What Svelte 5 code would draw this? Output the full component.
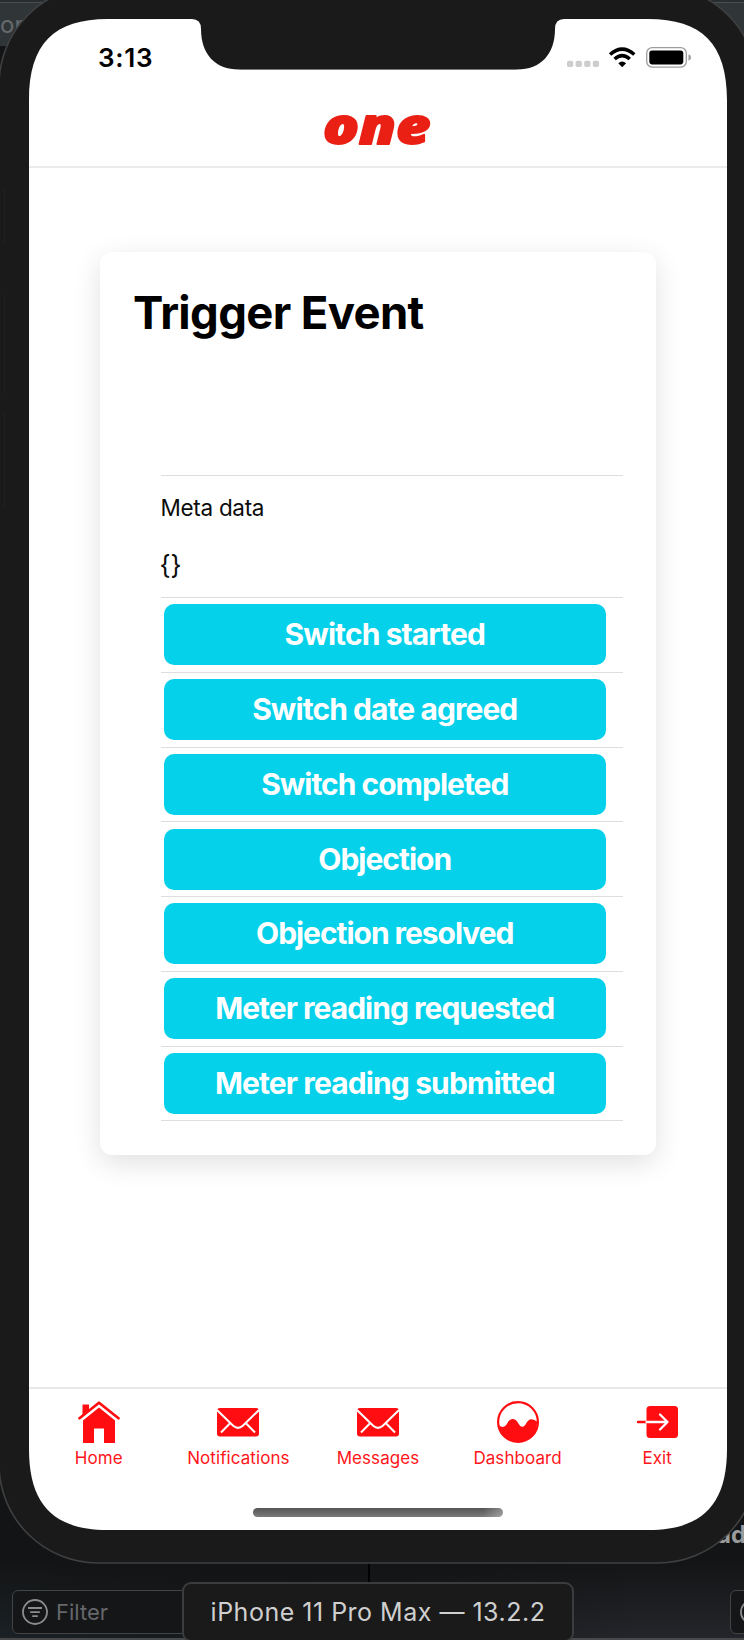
<script>
  const events = [
    { label: 'Switch started', spacing: -0.9 },
    { label: 'Switch date agreed', spacing: -0.93 },
    { label: 'Switch completed', spacing: -1 },
    { label: 'Objection', spacing: -1 },
    { label: 'Objection resolved', spacing: -1.05 },
    { label: 'Meter reading requested', spacing: -0.98 },
    { label: 'Meter reading submitted', spacing: -0.88 }
  ];
  const tabs = [
    { label: 'Home', icon: 'home' },
    { label: 'Notifications', icon: 'mail' },
    { label: 'Messages', icon: 'mail' },
    { label: 'Dashboard', icon: 'chart' },
    { label: 'Exit', icon: 'exit' }
  ];
</script>

<div class="desktop">
  <div class="editor-top">or</div>
  <div class="editor-word">ud</div>
  <div class="divider"></div>
  <div class="filter">
    <svg width="26" height="26" viewBox="0 0 26 26" fill="none" stroke="#8b8c8d" stroke-width="1.8">
      <circle cx="13" cy="13" r="12" /><path d="M6 9h14M8.2 13.2h9.6M10.2 17.2h5.6" />
    </svg>
    <span>Filter</span>
  </div>
  <div class="filter side">
    <svg width="26" height="26" viewBox="0 0 26 26" fill="none" stroke="#8b8c8d" stroke-width="1.8"><circle cx="13" cy="13" r="12" /></svg>
  </div>

  <svg class="bezel" width="744" height="1640" viewBox="0 0 744 1640">
    <rect x="-1" y="-14" width="758" height="1577" rx="99" fill="#1a1a1a" stroke="#3f4041" stroke-width="1.6" />
    <path d="M4.5 189v55M4.5 295v98M4.5 411v98" stroke="#202020" />
    <path fill="#fff" d="M29 100C29 44 54 19 108 19H192Q201 19 201 29C201 54 215 69.500 239 69.500H517C541 69.500 555 54 555 29Q555 19 564 19H648C702 19 727 44 727 100V1449C727 1505 702 1530 648 1530H108C54 1530 29 1505 29 1449Z" />
    <path d="M240 69.500H516" stroke="#777" />
  </svg>

  <main class="screen">
    <div class="status">
      <span class="time">3:13</span>
      <svg width="125" height="24" viewBox="0 0 125 24">
        <g fill="#cdcdcd">
          <rect x="0" y="14.700" width="6.300" height="6.300" rx="1.800" /><rect x="8.600" y="14.700" width="6.300" height="6.300" rx="1.800" />
          <rect x="17.200" y="14.700" width="6.300" height="6.300" rx="1.800" /><rect x="25.800" y="14.700" width="6.300" height="6.300" rx="1.800" />
        </g>
        <g fill="none" stroke="#000">
          <path d="M43.100 8.500Q55.200 -2.200 67.300 8.500" stroke-width="3.500" />
          <path d="M47.600 13Q55.200 6.300 62.800 13" stroke-width="3.500" />
        </g>
        <path d="M51.300 17.200Q55.200 13.900 59.100 17.200L55.200 21.300Z" />
        <rect x="79.700" y="1.700" width="39.600" height="19.400" rx="5.500" fill="none" stroke="#9c9c9c" stroke-width="1.300" />
        <rect x="82.300" y="4.400" width="34" height="14" rx="2.800" />
        <path d="M121.500 8.300Q124 9.200 124 11.500T121.500 14.700Z" fill="#9c9c9c" />
      </svg>
    </div>

    <header>
      <svg width="120" height="58" viewBox="0 0 120 58">
        <text x="5" y="51" textLength="107.500" lengthAdjust="spacingAndGlyphs">one</text>
      </svg>
    </header>

    <section class="content">
      <article class="card">
        <h1>Trigger Event</h1>
        <div class="list">
          <div class="meta">
            <div class="meta-label">Meta data</div>
            <div class="meta-value">{'{}'}</div>
          </div>
          {#each events as e}
            <div class="row"><button style="letter-spacing: {e.spacing}px">{e.label}</button></div>
          {/each}
        </div>
      </article>
    </section>

    <nav>
      {#each tabs as t}
        <div class="tab">
          <svg width="42" height="42" viewBox="0 0 42 42">
            {#if t.icon === 'home'}
              <path d="M5 18.500L21 5.500L37 18.500V42H26V27.500H16V42H5Z" fill="#ff0d10" />
              <path d="M1.500 18.500L21 2.600L40.500 18.500" fill="none" stroke="#fff" stroke-width="6" />
              <path d="M4.500 3.500H11V9L4.500 14.500Z" fill="#ff0d10" />
              <path d="M1.500 17.200L21 1.700L40.500 17.200" fill="none" stroke="#ff0d10" stroke-width="2.700" stroke-linecap="round" stroke-linejoin="round" />
            {:else if t.icon === 'mail'}
              <rect y="7" width="42" height="28.500" rx="3" fill="#ff0d10" />
              <path d="M0 9L16.200 24.800Q21 29 25.800 24.800L42 9M13.300 22L4 31.500M28.700 22L38 31.500" fill="none" stroke="#fff" stroke-width="2" />
            {:else if t.icon === 'chart'}
              <circle cx="21" cy="21" r="19.900" fill="#fff" stroke="#ff0d10" stroke-width="2.200" />
              <path d="M2 24C6 28 9 25 11 21C13.500 17 18 17 20.500 21C23 25.500 25.500 28 28.500 23.500C31.500 18.500 33.500 16.500 40 20.500C40.500 33 32 41 21 41S2 33 2 24Z" fill="#ff0d10" />
            {:else}
              <rect x="10.500" y="5" width="31.500" height="32" rx="3.500" fill="#ff0d10" />
              <path d="M2 21H10.500" stroke="#ff0d10" stroke-width="2.400" stroke-linecap="round" />
              <path d="M10.500 21H31.300M24 13.500L31.500 21L24 28.500" fill="none" stroke="#fff" stroke-width="2.300" stroke-linecap="round" stroke-linejoin="round" />
            {/if}
          </svg>
          <span>{t.label}</span>
        </div>
      {/each}
    </nav>
    <div class="home-indicator"></div>
  </main>

  <div class="device-label">iPhone 11 Pro Max — 13.2.2</div>
</div>

<style>
  :global(body) { margin: 0; }
  .desktop {
    position: relative;
    width: 744px;
    height: 1640px;
    overflow: hidden;
    box-sizing: border-box;
    padding: 19px 17px 0 29px;
    font-family: Inter, "Liberation Sans", sans-serif;
    background: linear-gradient(#131415 0, #131415 1560px, transparent 1640px), linear-gradient(90deg, #1b2125 0, #151618 300px, #25262b 640px, #25262b 100%);
  }
  .desktop::after {
    content: "";
    position: absolute;
    left: 0;
    right: 0;
    bottom: 0;
    height: 2px;
    background: #48494b;
  }
  .editor-top {
    position: absolute;
    left: 0;
    right: 0;
    top: 0;
    height: 46px;
    box-sizing: border-box;
    border-top: 2px solid #2a2d2f;
    box-shadow: inset 0 1px #4a4e50;
    background: #303538;
    color: #666a6c;
    font-size: 24px;
    line-height: 46px;
  }
  .editor-word {
    position: absolute;
    left: 716px;
    top: 1519px;
    font-size: 24px;
    line-height: 32px;
    font-weight: 700;
    color: #999a9b;
  }
  .divider { position: absolute; left: 368px; top: 1560px; width: 2px; height: 78px; background: #020202; }
  .filter {
    position: absolute;
    left: 12px;
    top: 1590px;
    width: 260px;
    height: 44px;
    box-sizing: border-box;
    border: 1px solid #414345;
    border-radius: 6px;
    display: flex;
    align-items: center;
    gap: 8px;
    padding-left: 9px;
    background: #151617;
    color: #65676a;
    font-size: 22px;
  }
  .side { left: 730px; }
  .filter svg { flex: none; }
  .bezel { position: absolute; left: 0; top: 0; }
  .screen {
    position: relative;
    width: 698px;
    height: 1511px;
    display: flex;
    flex-direction: column;
    align-items: stretch;
  }
  .status {
    height: 69px;
    display: flex;
    justify-content: space-between;
    align-items: flex-start;
    box-sizing: border-box;
    padding: 26.500px 35px 0 69px;
  }
  .time { font-size: 26px; line-height: 24px; font-weight: 600; letter-spacing: 0.7px; }
  header {
    height: 80px;
    box-sizing: border-box;
    border-bottom: 2px solid #ebebeb;
    display: flex;
    justify-content: center;
    padding-top: 5px;
  }
  header svg { overflow: visible; }
  header text { font: italic 800 50px/1 "Open Sans", sans-serif; fill: #ea2015; stroke: #ea2015; stroke-width: 1.800px; stroke-linejoin: round; }
  .content { flex: 1; padding: 84px 71px 0; }
  .card {
    box-sizing: border-box;
    height: 903px;
    padding: 34px 33px 0;
    border-radius: 12px;
    background: #fff;
    box-shadow: 0 8px 28px rgba(0, 0, 0, 0.12);
  }
  h1 { margin: 0; font-size: 45.500px; line-height: 54px; font-weight: 700; letter-spacing: -0.650px; }
  .list { margin: 135px 0 0 27.500px; border-top: 1px solid #dedede; }
  .meta { height: 122px; box-sizing: border-box; padding-top: 17px; border-bottom: 1px solid #dedede; color: #0c0c0c; }
  .meta-label { font-size: 22.500px; line-height: 30px; letter-spacing: -0.300px; }
  .meta-value { margin: 25.500px 0 0 -1px; font-size: 26px; line-height: 32px; }
  .row {
    height: 74.750px;
    box-sizing: border-box;
    border-bottom: 1px solid #dedede;
    padding: 6.400px 17.500px 0 3.500px;
  }
  button {
    display: block;
    width: 100%;
    height: 61px;
    padding: 0 0 1px;
    border: 0;
    border-radius: 10px;
    background: #06d1ea;
    color: #fff;
    font: 700 30px/60px Inter, "Liberation Sans", sans-serif;
    white-space: nowrap;
  }
  nav { height: 143px; box-sizing: border-box; display: grid; grid-template-columns: repeat(5, 1fr); border-top: 2px solid #e9e9e9; padding-top: 12px; }
  .tab { display: flex; flex-direction: column; align-items: center; color: #ff1519; font-size: 17px; line-height: 24px; }
  .tab span { margin-top: 3px; letter-spacing: 0.080px; }
  .home-indicator {
    position: absolute;
    left: 224px;
    top: 1489px;
    width: 250px;
    height: 8.500px;
    border-radius: 5px;
    background: linear-gradient(90deg, transparent 92%, rgba(255, 255, 255, 0.3)), linear-gradient(#555, #7b7b7b);
  }
  .device-label {
    position: absolute;
    left: 182px;
    top: 1582px;
    width: 392px;
    height: 60px;
    box-sizing: border-box;
    border: 2px solid #3b3c3d;
    border-radius: 9px;
    background: #1a1a1a;
    color: #cfcfcf;
    text-align: center;
    font-size: 25px;
    letter-spacing: 0.500px;
    line-height: 56px;
    white-space: nowrap;
    z-index: 2;
  }
</style>
